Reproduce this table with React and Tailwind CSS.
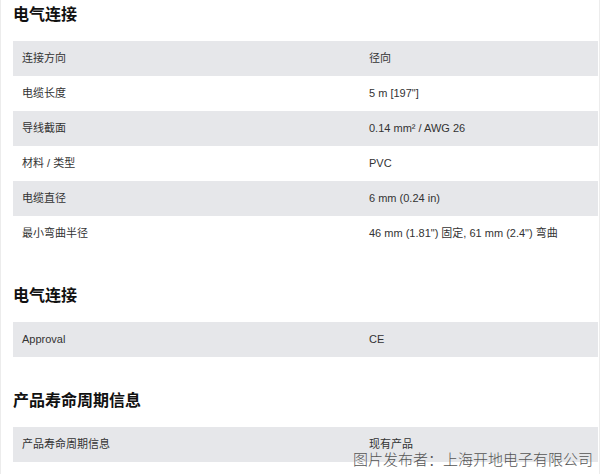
import React from "react";

const sections = [
  {
    title: "电气连接",
    rows: [
      ["连接方向", "径向"],
      ["电缆长度", "5 m [197\"]"],
      ["导线截面", "0.14 mm² / AWG 26"],
      ["材料 / 类型", "PVC"],
      ["电缆直径", "6 mm (0.24 in)"],
      ["最小弯曲半径", "46 mm (1.81\") 固定, 61 mm (2.4\") 弯曲"],
    ],
  },
  { title: "电气连接", rows: [["Approval", "CE"]] },
  { title: "产品寿命周期信息", rows: [["产品寿命周期信息", "现有产品"]] },
];

export default function App() {
  return (
    <div
      className="relative w-[600px] h-[474px] overflow-hidden bg-white border-x border-[#ececec] text-[#333]"
      style={{ fontFamily: '"Liberation Sans", "Noto Sans CJK SC", sans-serif' }}
    >
      <div className="pl-[12px] pr-[1px]">
        {sections.map((s, i) => (
          <div key={i} className={i === 0 ? "" : i === 1 ? "pt-[30px]" : "pt-[29px]"}>
            <h2 className="pt-[3px] pb-[14px] h-[41px] leading-[24px] text-[16px] font-bold text-[#111]">
              {s.title}
            </h2>
            <div>
              {s.rows.map((r, j) => (
                <div
                  key={j}
                  className={`flex h-[35px] items-center text-[11px] ${j % 2 === 0 ? "bg-[#e6e7ea]" : "bg-white"}`}
                >
                  <div className="w-[356px] pl-[9px]">{r[0]}</div>
                  <div>{r[1]}</div>
                </div>
              ))}
            </div>
          </div>
        ))}
      </div>
      <div
        className="absolute left-[352px] top-[449px] whitespace-nowrap text-[15px] leading-[20px] font-light text-[#555]"
        style={{ fontFamily: '"Noto Sans CJK SC", sans-serif' }}
      >
        图片发布者：上海开地电子有限公司
      </div>
    </div>
  );
}
